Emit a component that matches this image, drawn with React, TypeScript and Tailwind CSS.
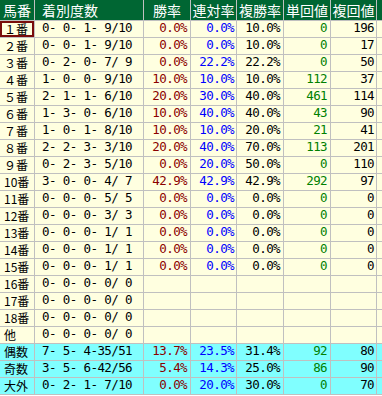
type Row = {
  name: string
  rec: string
  win: string
  ren: string
  fuku: string
  tan: string
  fkai: string
  cyan?: boolean
  mark?: boolean
}

const rows: Row[] = [
  { name: '１番', rec: '0- 0- 1- 9/10', win: '0.0%', ren: '0.0%', fuku: '10.0%', tan: '0', fkai: '196', mark: true },
  { name: '２番', rec: '0- 0- 1- 9/10', win: '0.0%', ren: '0.0%', fuku: '10.0%', tan: '0', fkai: '17' },
  { name: '３番', rec: '0- 2- 0- 7/ 9', win: '0.0%', ren: '22.2%', fuku: '22.2%', tan: '0', fkai: '50' },
  { name: '４番', rec: '1- 0- 0- 9/10', win: '10.0%', ren: '10.0%', fuku: '10.0%', tan: '112', fkai: '37' },
  { name: '５番', rec: '2- 1- 1- 6/10', win: '20.0%', ren: '30.0%', fuku: '40.0%', tan: '461', fkai: '114' },
  { name: '６番', rec: '1- 3- 0- 6/10', win: '10.0%', ren: '40.0%', fuku: '40.0%', tan: '43', fkai: '90' },
  { name: '７番', rec: '1- 0- 1- 8/10', win: '10.0%', ren: '10.0%', fuku: '20.0%', tan: '21', fkai: '41' },
  { name: '８番', rec: '2- 2- 3- 3/10', win: '20.0%', ren: '40.0%', fuku: '70.0%', tan: '113', fkai: '201' },
  { name: '９番', rec: '0- 2- 3- 5/10', win: '0.0%', ren: '20.0%', fuku: '50.0%', tan: '0', fkai: '110' },
  { name: '10番', rec: '3- 0- 0- 4/ 7', win: '42.9%', ren: '42.9%', fuku: '42.9%', tan: '292', fkai: '97' },
  { name: '11番', rec: '0- 0- 0- 5/ 5', win: '0.0%', ren: '0.0%', fuku: '0.0%', tan: '0', fkai: '0' },
  { name: '12番', rec: '0- 0- 0- 3/ 3', win: '0.0%', ren: '0.0%', fuku: '0.0%', tan: '0', fkai: '0' },
  { name: '13番', rec: '0- 0- 0- 1/ 1', win: '0.0%', ren: '0.0%', fuku: '0.0%', tan: '0', fkai: '0' },
  { name: '14番', rec: '0- 0- 0- 1/ 1', win: '0.0%', ren: '0.0%', fuku: '0.0%', tan: '0', fkai: '0' },
  { name: '15番', rec: '0- 0- 0- 1/ 1', win: '0.0%', ren: '0.0%', fuku: '0.0%', tan: '0', fkai: '0' },
  { name: '16番', rec: '0- 0- 0- 0/ 0', win: '', ren: '', fuku: '', tan: '', fkai: '' },
  { name: '17番', rec: '0- 0- 0- 0/ 0', win: '', ren: '', fuku: '', tan: '', fkai: '' },
  { name: '18番', rec: '0- 0- 0- 0/ 0', win: '', ren: '', fuku: '', tan: '', fkai: '' },
  { name: '他', rec: '0- 0- 0- 0/ 0', win: '', ren: '', fuku: '', tan: '', fkai: '' },
  { name: '偶数', rec: '7- 5- 4-35/51', win: '13.7%', ren: '23.5%', fuku: '31.4%', tan: '92', fkai: '80', cyan: true },
  { name: '奇数', rec: '3- 5- 6-42/56', win: '5.4%', ren: '14.3%', fuku: '25.0%', tan: '86', fkai: '90', cyan: true },
  { name: '大外', rec: '0- 2- 1- 7/10', win: '0.0%', ren: '20.0%', fuku: '30.0%', tan: '0', fkai: '70', cyan: true },
]

const grid = 'grid grid-cols-[34px_108px_46px_45px_46px_46px_45px_40px] gap-px'
const jp = "font-['Noto_Sans_CJK_JP',sans-serif]"
const mono = "font-['DejaVu_Sans_Mono','Noto_Sans_CJK_JP',monospace] text-[12.5px] tracking-[-0.6px]"
const cell = 'flex h-4 items-center overflow-hidden whitespace-pre pb-[2px] leading-none'

function Head({ children, left }: { children?: string; left?: boolean }) {
  return (
    <div className={`flex h-5 items-center whitespace-nowrap bg-[#006633] pb-px leading-none ${left ? 'pl-[7px]' : 'justify-center'}`}>
      {children}
    </div>
  )
}

export default function App() {
  return (
    <div className="h-[396px] w-[382px] overflow-hidden bg-white">
      <div className="flex w-[417px] flex-col gap-px bg-[#c0c0c0] pb-px">
        <div className={`${grid} text-[14px] text-white ${jp}`}>
          <Head>馬番</Head>
          <Head left>着別度数</Head>
          <Head>勝率</Head>
          <Head>連対率</Head>
          <Head>複勝率</Head>
          <Head>単回値</Head>
          <Head>複回値</Head>
          <Head />
        </div>

        {rows.map((r) => {
          const bg = r.cyan ? 'bg-[#80ffff]' : 'bg-[#ffffe0]'
          return (
            <div key={r.name} className={grid}>
              <div
                className={`flex h-4 items-center whitespace-nowrap leading-none ${bg} ${jp} text-[12px] text-black ${
                  r.mark ? 'border-2 border-[#7a0c0c] pl-[2px]' : 'pl-[4px] pb-px'
                }`}
              >
                {r.name}
              </div>
              <div className={`${cell} ${bg} ${mono} pl-[7px] text-black`}>{r.rec}</div>
              <div className={`${cell} ${bg} ${mono} justify-end pr-[3px] text-[#8b0000]`}>{r.win}</div>
              <div className={`${cell} ${bg} ${mono} justify-end pr-[2px] text-[#0000ff]`}>{r.ren}</div>
              <div className={`${cell} ${bg} ${mono} justify-end pr-[3px] text-black`}>{r.fuku}</div>
              <div className={`${cell} ${bg} ${mono} justify-end pr-[3px] text-[#008000]`}>{r.tan}</div>
              <div className={`${cell} ${bg} ${mono} justify-end pr-[2px] text-black`}>{r.fkai}</div>
              <div className={`h-4 ${bg}`} />
            </div>
          )
        })}
      </div>
    </div>
  )
}
